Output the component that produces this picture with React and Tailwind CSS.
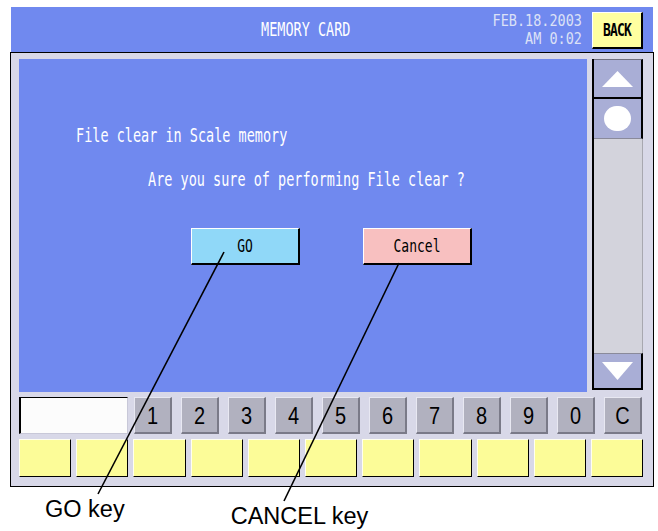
import React from "react";

const monoCls = "font-['DejaVu_Sans_Mono',monospace]";

function Txt({ children, className = "" }) {
  return (
    <div
      className={`${monoCls} block text-[13.5px] leading-none h-[13.5px] whitespace-pre scale-y-[1.4] ${className}`}
    >
      {children}
    </div>
  );
}

export default function App() {
  const digits = ["1", "2", "3", "4", "5", "6", "7", "8", "9", "0", "C"];
  const yellows = Array.from({ length: 11 });
  return (
    <div className="relative w-[658px] h-[531px] bg-white overflow-hidden pt-[7px]">
      {/* Header */}
      <div className="ml-[11px] w-[642px] h-[45px] bg-[#7089ef] flex items-start pr-[10px]">
        <Txt className="ml-[250px] mt-[16px] text-white">MEMORY CARD</Txt>
        <div className="flex-1" />
        <div className="flex flex-col items-end mt-[6px] text-[#dce1f6]">
          <div className={`${monoCls} block text-[13.5px] leading-[14px] h-[14px] whitespace-pre scale-y-[1.2]`}>FEB.18.2003</div>
          <div className={`${monoCls} block text-[13.5px] leading-[14px] h-[14px] whitespace-pre scale-y-[1.2] mt-[4px]`}>AM 0:02</div>
        </div>
        <div className="ml-[10px] mt-[5px] w-[51px] h-[37px] bg-[#ffffa0] border-t border-l border-white border-r-2 border-b-2 border-r-black border-b-black flex items-center justify-center">
          <div className="font-['DejaVu_Sans_Mono',monospace] font-bold text-[13px] leading-none scale-y-[1.3] tracking-[-0.8px] text-black">
            BACK
          </div>
        </div>
      </div>

      {/* Body */}
      <div className="ml-[10px] w-[644px] border border-black bg-[#d8d8e8] pl-[8px] pt-[6px] pr-[10px] pb-[9px]">
        <div className="flex gap-[5px] h-[333px]">
          <div className="w-[568px] h-[333px] bg-[#7089ef] flex flex-col items-start">
            <Txt className="ml-[57px] mt-[69.5px] text-white">File clear in Scale memory</Txt>
            <Txt className="ml-[129px] mt-[30.5px] text-white">Are you sure of performing File clear ?</Txt>
            <div className="ml-[172px] mt-[42px] flex gap-[63px]">
              <div className="w-[109px] h-[37px] bg-[#90d8f8] border-t border-l border-white border-r-2 border-b-2 border-r-black border-b-black flex items-center justify-center">
                <div className={`${monoCls} text-[13px] leading-none scale-y-[1.3] text-black`}>GO</div>
              </div>
              <div className="w-[109px] h-[37px] bg-[#f8c0c0] border-t border-l border-white border-r-2 border-b-2 border-r-black border-b-black flex items-center justify-center">
                <div className={`${monoCls} text-[13px] leading-none scale-y-[1.3] text-black`}>Cancel</div>
              </div>
            </div>
          </div>
          {/* Scrollbar */}
          <div className="w-[51px] h-[331px] flex flex-col border-l-2 border-black">
            <div className="h-[40px] bg-[#a9aed6] border-t border-t-[#707080] border-r-2 border-b-2 border-r-black border-b-black flex items-center justify-center">
              <svg width="31" height="16" viewBox="0 0 31 16">
                <polygon points="15.5,0 31,16 0,16" fill="white" />
              </svg>
            </div>
            <div className="h-[40px] bg-[#a9aed6] border-r-2 border-r-black border-b border-b-[#8a8a9a] flex items-center justify-center">
              <div className="w-[27px] h-[25px] rounded-full bg-white" />
            </div>
            <div className="flex-1 bg-[#d3d3dc] border-r border-r-[#a8a8b0]" />
            <div className="h-[37px] bg-[#a9aed6] border-t border-t-[#8a8a9a] border-r-2 border-b-2 border-r-black border-b-black flex items-center justify-center">
              <svg width="31" height="18" viewBox="0 0 31 18">
                <polygon points="0,0 31,0 15.5,18" fill="white" />
              </svg>
            </div>
          </div>
        </div>

        {/* Row 1 */}
        <div className="mt-[5px] h-[37px] flex">
          <div className="w-[109px] h-[37px] bg-[#fcfcfc] border-t border-l-2 border-black border-r border-b border-r-[#c8c8d8] border-b-[#c8c8d8]" />
          <div className="ml-[6px] flex gap-[9px]">
            {digits.map((d) => (
              <div
                key={d}
                className="w-[38px] h-[37px] pt-[2px] bg-[#b1b1bf] border-t border-l border-t-[#e8e8f2] border-l-[#e8e8f2] border-r-2 border-b-2 border-r-[#7a7a88] border-b-[#7a7a88] flex items-center justify-center"
              >
                <div className="font-['Liberation_Sans',Arial,sans-serif] text-[20px] leading-none scale-y-[1.2] text-black">
                  {d}
                </div>
              </div>
            ))}
          </div>
        </div>

        {/* Row 2 */}
        <div className="mt-[5px] h-[38px] flex gap-[5px]">
          {yellows.map((_, i) => (
            <div
              key={i}
              className="flex-1 h-[38px] bg-[#fcfc98] border-t border-l border-t-[#fffff0] border-l-[#fffff0] border-r border-b border-r-black border-b-black"
            />
          ))}
        </div>
      </div>

      {/* Labels */}
      <div className="flex items-start font-['Liberation_Sans',Arial,sans-serif] text-[23.5px] leading-none text-black">
        <div className="ml-[45px] mt-[11px]">GO key</div>
        <div className="ml-[106px] mt-[18px]">CANCEL key</div>
      </div>

      {/* Callout lines */}
      <svg
        className="absolute left-0 top-0 pointer-events-none"
        width="658"
        height="531"
        viewBox="0 0 658 531"
      >
        <line x1="224" y1="252" x2="98" y2="494" stroke="black" strokeWidth="1.6" />
        <line x1="399" y1="263" x2="284" y2="501" stroke="black" strokeWidth="1.6" />
      </svg>
    </div>
  );
}
